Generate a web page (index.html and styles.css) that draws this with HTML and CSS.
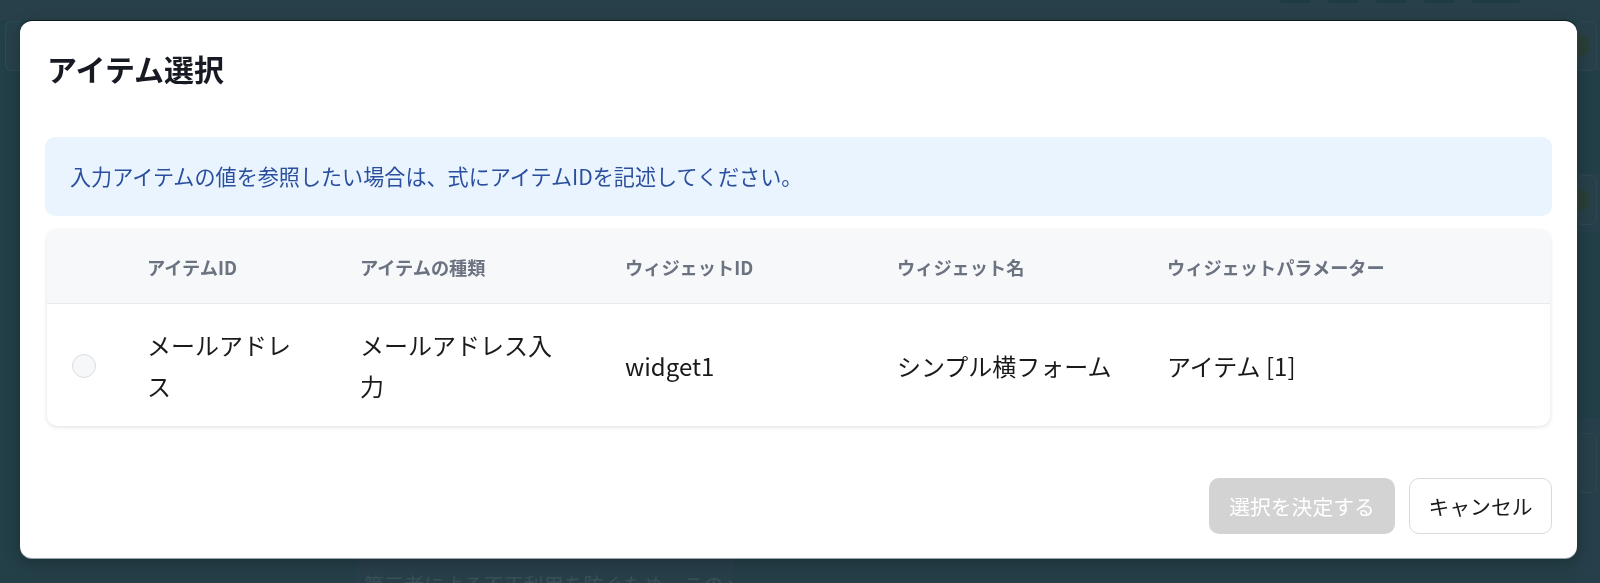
FILE: index.html
```html
<!DOCTYPE html>
<html lang="ja">
<head>
<meta charset="utf-8">
<title>アイテム選択</title>
<link rel="stylesheet" href="styles.css">
</head>
<body>
<div class="page">
  <div class="topbar">
    <span class="pill"></span><span class="pill"></span><span class="pill"></span><span class="pill"></span><span class="pill wide"></span>
  </div>
  <div class="main">
    <div class="side-left"><div class="side-card"></div></div>
    <div class="center">
      <div class="bottom-panel">第三者による不正利用を防ぐため、このメールアドレスは</div>
    </div>
    <div class="side-right">
      <div class="r-card first"><span class="dot"></span></div>
      <div class="r-band"></div>
      <div class="r-card second"><span class="dot"></span></div>
      <div class="r-band tall"></div>
      <div class="r-card third"></div>
    </div>
  </div>
</div>

<div class="modal" role="dialog">
  <header class="modal-header">アイテム選択</header>
  <div class="modal-body">
    <div class="info">入力アイテムの値を参照したい場合は、式にアイテムIDを記述してください。</div>
    <div class="table-card">
      <div class="row head">
        <div class="cell c0"></div>
        <div class="cell c1">アイテムID</div>
        <div class="cell c2">アイテムの種類</div>
        <div class="cell c3">ウィジェットID</div>
        <div class="cell c4">ウィジェット名</div>
        <div class="cell c5">ウィジェットパラメーター</div>
      </div>
      <div class="row body">
        <div class="cell c0"><span class="radio"></span></div>
        <div class="cell c1"><span class="w-id">メールアドレス</span></div>
        <div class="cell c2"><span class="w-type">メールアドレス入力</span></div>
        <div class="cell c3">widget1</div>
        <div class="cell c4">シンプル横フォーム</div>
        <div class="cell c5">アイテム [1]</div>
      </div>
    </div>
  </div>
  <footer class="modal-footer">
    <button class="btn btn-primary" disabled>選択を決定する</button>
    <button class="btn btn-outline">キャンセル</button>
  </footer>
</div>
</body>
</html>
```

FILE: styles.css
```css
* { box-sizing: border-box; }

html, body {
  margin: 0;
  padding: 0;
  height: 583px;
  overflow: hidden;
}

body {
  background: #243f48;
  font-family: "Noto Sans CJK JP", "Noto Sans", sans-serif;
  color: #1a1a1a;
}

/* ---------- dimmed background page ---------- */
.page {
  height: 583px;
  display: flex;
  flex-direction: column;
}

.topbar {
  height: 20px;
  background: #28404a;
  display: flex;
  justify-content: flex-end;
  align-items: flex-start;
  gap: 17px;
  padding-right: 80px;
}

.pill {
  width: 31px;
  height: 3px;
  background: #1e3a45;
  border-radius: 0 0 8px 8px;
}
.pill.wide { width: 48px; }

.main {
  flex: 1;
  display: flex;
}

.side-left {
  width: 20px;
  background: #233f47;
  padding: 1px 0 0 5px;
}

.side-card {
  height: 50px;
  border: 1px solid #2f4a53;
  border-right: none;
  border-radius: 6px 0 0 6px;
  background: #27414a;
}

.center {
  flex: 1;
  display: flex;
  flex-direction: column;
  justify-content: flex-end;
  padding-left: 336px;
}

.bottom-panel {
  width: 378px;
  height: 24px;
  background: #283f4a;
  color: #3a5058;
  font-size: 20px;
  line-height: 20px;
  padding: 16px 0 0 8px;
  white-space: nowrap;
  overflow: hidden;
}

.side-right {
  width: 23px;
  background: #263f4a;
  display: flex;
  flex-direction: column;
}

.r-card {
  height: 50px;
  border: 1px solid #2e4852;
  border-radius: 6px;
  margin-right: 3px;
  background: #284049;
  overflow: hidden;
}
.r-card.first { margin-top: 1px; }
.r-card.second { margin-top: 2px; }
.r-card.third { margin-top: 15px; height: 60px; }

.dot {
  display: block;
  width: 22px;
  height: 22px;
  border-radius: 50%;
  background: #2a3f38;
  margin: 13px 0 0 -10px;
}

.r-band { height: 102px; background: #223e47; }
.r-band.tall { height: 186px; margin-top: 7px; }

/* ---------- modal ---------- */
.modal {
  position: fixed;
  left: 20px;
  top: 21px;
  width: 1557px;
  height: 537px;
  background: #ffffff;
  border-radius: 12px;
  box-shadow: 0 -1px 0 #0d1b21, 0 1px 0 #9aa4a8, 0 4px 16px rgba(0, 0, 0, 0.25);
  display: flex;
  flex-direction: column;
}

.modal-header {
  padding: 24px 27px 0;
  font-size: 30px;
  line-height: 46px;
  font-weight: 700;
  color: #171923;
}

.modal-body {
  padding: 46px 25px 0;
}

.info {
  background: #eaf4fe;
  border-radius: 10px;
  padding: 24px 25px;
  font-size: 21.1px;
  line-height: 31px;
  color: #2a4f9e;
}

.table-card {
  margin: 14px 2px 0;
  background: #ffffff;
  border-radius: 10px;
  box-shadow: 0 1px 4px rgba(0, 0, 0, 0.13);
  overflow: hidden;
}

.row {
  display: grid;
  grid-template-columns: 100px 213px 265px 272px 270px 1fr;
  align-items: center;
}

.row.head {
  height: 74px;
  background: #f7f8fa;
  border-bottom: 1px solid #e8eaee;
  font-size: 18.2px;
  font-weight: 600;
  color: #6b7280;
}

.row.body {
  height: 122px;
  font-size: 24px;
  line-height: 1.7;
  color: #1a1a1a;
  padding-top: 2px;
}

.cell.c0 {
  padding-left: 25px;
  display: flex;
  align-items: center;
}

.radio {
  width: 24px;
  height: 24px;
  border-radius: 50%;
  border: 1px solid #d9dde3;
  background: #f6f7f9;
}

.w-id { display: block; max-width: 6.5em; }
.w-type { display: block; max-width: 8.5em; }

/* ---------- footer ---------- */
.modal-footer {
  margin-top: auto;
  padding: 0 25px 24px;
  display: flex;
  justify-content: flex-end;
  gap: 14px;
}

.btn {
  height: 56px;
  border-radius: 10px;
  font-family: inherit;
  font-size: 20.8px;
  line-height: 1;
  white-space: nowrap;
}

.btn-primary {
  background: #d3d3d3;
  color: #ffffff;
  border: none;
  padding: 0 19px;
  min-width: 186px;
}

.btn-outline {
  background: #ffffff;
  color: #1a1a1a;
  border: 1px solid #dadada;
  padding: 0 18.5px;
}
```
